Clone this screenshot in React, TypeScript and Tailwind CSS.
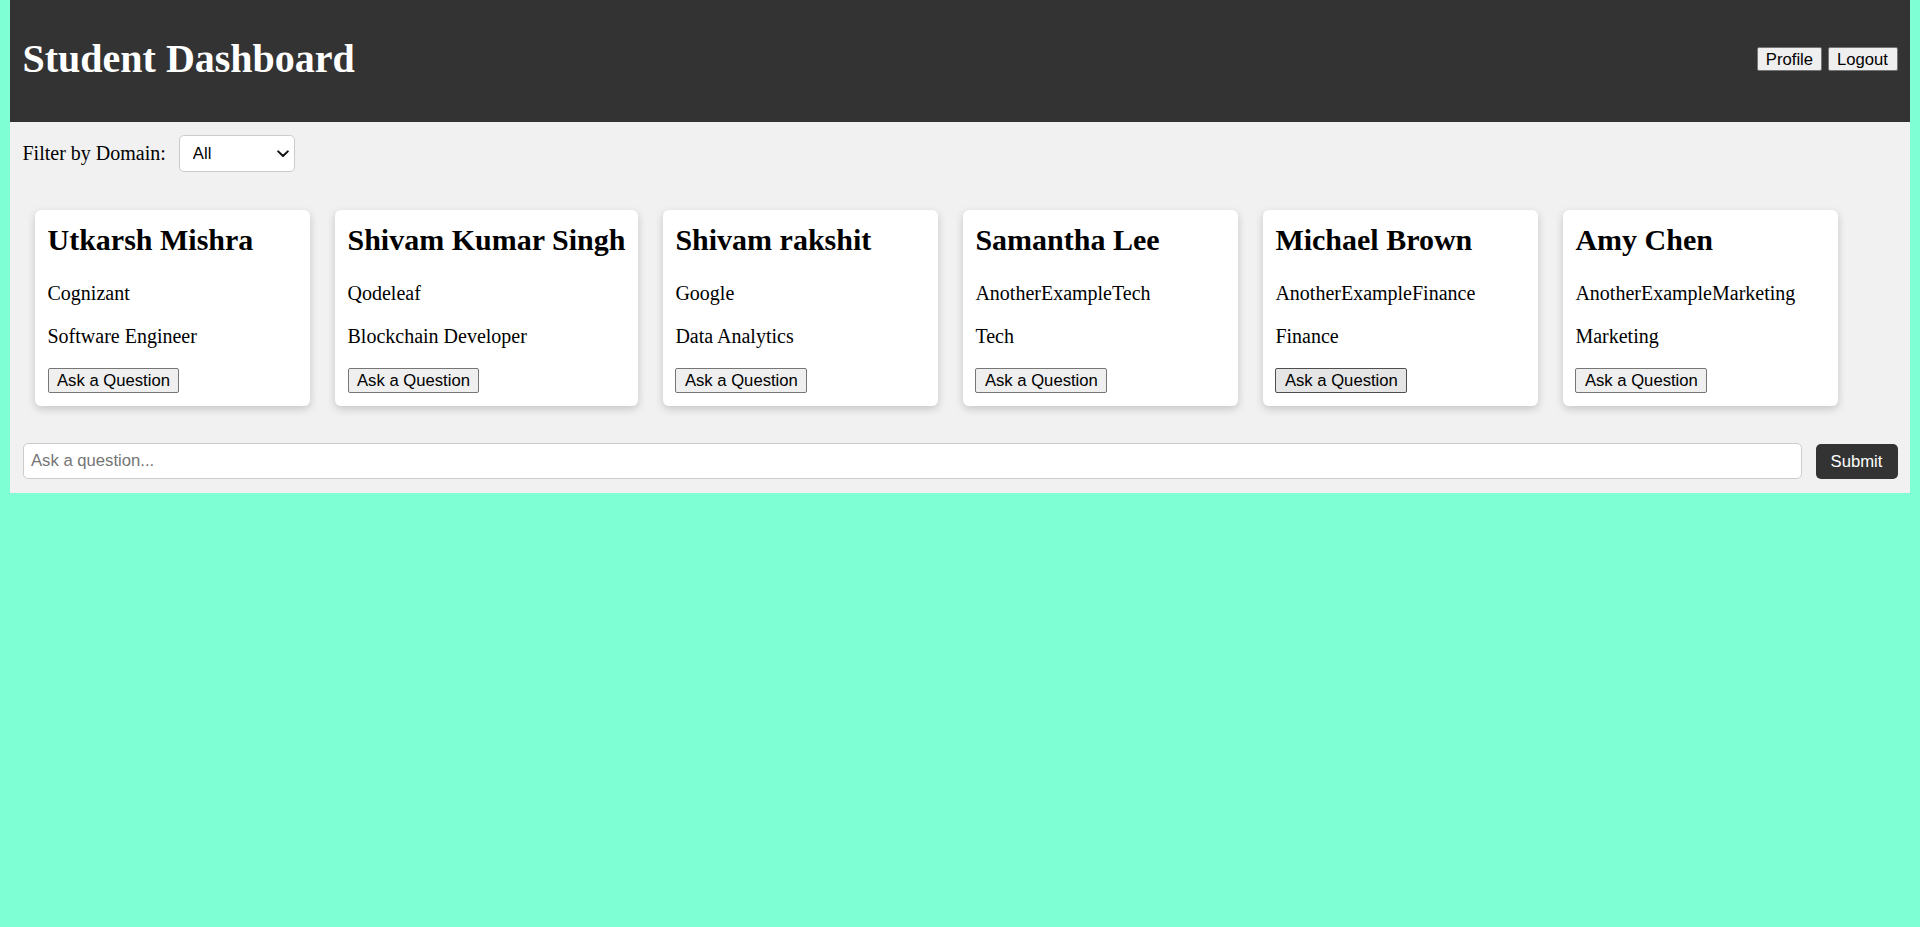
import React from "react";

type Mentor = { name: string; company: string; domain: string; active?: boolean };

const mentors: Mentor[] = [
  { name: "Utkarsh Mishra", company: "Cognizant", domain: "Software Engineer" },
  { name: "Shivam Kumar Singh", company: "Qodeleaf", domain: "Blockchain Developer" },
  { name: "Shivam rakshit", company: "Google", domain: "Data Analytics" },
  { name: "Samantha Lee", company: "AnotherExampleTech", domain: "Tech" },
  { name: "Michael Brown", company: "AnotherExampleFinance", domain: "Finance", active: true },
  { name: "Amy Chen", company: "AnotherExampleMarketing", domain: "Marketing" },
];

const sans = "font-['Liberation_Sans',Arial,sans-serif]";

function Card({ m }: { m: Mentor }) {
  return (
    <div className="m-[12.5px] min-w-[275px] rounded-[6px] bg-white p-[12.5px] shadow-[0_3px_9px_rgba(0,0,0,0.18)]">
      <h2 className="mb-[25px] whitespace-nowrap text-[30px] font-bold leading-[35px] text-black">{m.name}</h2>
      <p className="mb-[20px] whitespace-nowrap text-[20px] leading-[23px] text-black">{m.company}</p>
      <p className="mb-[20px] whitespace-nowrap text-[20px] leading-[23px] text-black">{m.domain}</p>
      <button
        className={
          m.active
            ? `${sans} flex h-[25px] items-center rounded-[2px] border border-[#4f4f4f] bg-[#e5e5e5] px-[8.5px] text-[16.67px] leading-[19px] text-black`
            : `${sans} flex h-[25px] items-center rounded-[2px] border border-[#767676] bg-[#efefef] px-[8.5px] text-[16.67px] leading-[19px] text-black`
        }
      >
        Ask a Question
      </button>
    </div>
  );
}

export default function App() {
  return (
    <div className="min-h-[927px] bg-[#7fffd4] px-[10px] font-['Liberation_Serif','Times_New_Roman',serif]">
      <div className="bg-[#f1f1f1]">
        <header className="flex h-[122px] items-center justify-between bg-[#333333] px-[12.5px] pb-[4px]">
          <h1 className="text-[40px] font-bold leading-[46px] text-white">Student Dashboard</h1>
          <div className="flex gap-[6px]">
            <button className={`${sans} flex h-[24px] items-center rounded-[2px] border border-[#767676] bg-[#efefef] px-[7.5px] text-[16.67px] leading-[19px] text-black`}>
              Profile
            </button>
            <button className={`${sans} flex h-[24px] items-center rounded-[2px] border border-[#767676] bg-[#efefef] px-[8.5px] text-[16.67px] leading-[19px] text-black`}>
              Logout
            </button>
          </div>
        </header>
        <main className="px-[12.5px] pb-[14px] pt-[12.5px]">
          <div className="mb-[25.5px] flex h-[37px] items-center gap-[13px]">
            <label className="text-[20px] leading-[23px] text-black">Filter by Domain:</label>
            <div className="relative h-[37px] w-[116px]">
              <select
                className={`${sans} h-full w-full appearance-none rounded-[5px] border border-[#cccccc] bg-white pl-[13px] text-[16.67px] text-black outline-none`}
                defaultValue="All"
              >
                <option>All</option>
                <option>Software Engineer</option>
                <option>Blockchain Developer</option>
                <option>Data Analytics</option>
                <option>Tech</option>
                <option>Finance</option>
                <option>Marketing</option>
              </select>
              <svg
                className="pointer-events-none absolute right-[6px] top-[15px]"
                width="12"
                height="8"
                viewBox="0 0 12 8"
                fill="none"
              >
                <path d="M1.2 1.4 L6 6 L10.8 1.4" stroke="#111" strokeWidth="2" strokeLinecap="round" strokeLinejoin="round" />
              </svg>
            </div>
          </div>
          <div className="flex flex-wrap">
            {mentors.map((m) => (
              <Card key={m.name} m={m} />
            ))}
          </div>
          <div className="mt-[25px] flex items-center gap-[14px]">
            <input
              type="text"
              placeholder="Ask a question..."
              className={`${sans} h-[36px] flex-1 rounded-[5px] border border-[#cccccc] bg-white px-[7.5px] text-[16.67px] text-black outline-none placeholder:text-[#757575]`}
            />
            <button className={`${sans} flex h-[35px] w-[82px] items-center justify-center rounded-[5px] bg-[#333333] text-[16.67px] text-white`}>
              Submit
            </button>
          </div>
        </main>
      </div>
    </div>
  );
}
